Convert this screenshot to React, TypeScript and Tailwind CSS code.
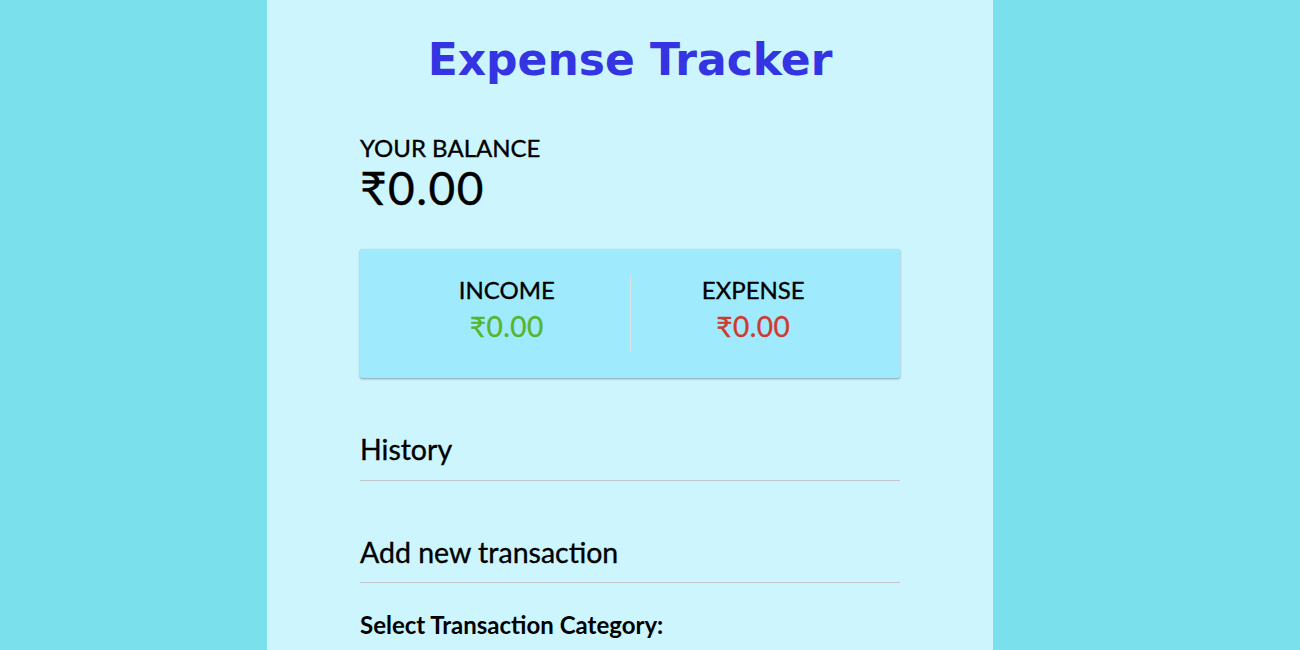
// Expense tracker — balance, income/expense card, history and add form.
const heavy = "[-webkit-text-stroke:0.35px_currentColor]";

function Stat({ label, amount, color }: { label: string; amount: string; color: string }) {
  return (
    <div className="flex flex-1 flex-col items-center self-start pt-[26px]">
      <h4 className={`text-[24px] leading-[30px] uppercase ${heavy}`}>{label}</h4>
      <p className={`text-[28px] leading-[42px] tracking-[0.5px] ${heavy} ${color}`}>{amount}</p>
    </div>
  );
}

export default function App() {
  return (
    <div className="flex min-h-screen bg-[#7ae0ec]">
      <div className="ml-[267px] flex w-[726px] flex-col items-center bg-[#ccf5fd] pb-10 font-['Lato',sans-serif] text-black">
        <h1 className="mt-[32px] font-['DejaVu_Sans',sans-serif] text-[44px] leading-[56px] font-bold text-[#3434e2]">
          Expense Tracker
        </h1>

        <div className="mt-[46px] w-[540px]">
          <h4 className={`text-[24px] leading-[28px] uppercase ${heavy}`}>Your Balance</h4>
          <p className={`text-[46px] leading-[52px] tracking-[1.5px] ${heavy}`}>₹0.00</p>

          <div className="mt-[35px] flex h-[129px] rounded-[2px] bg-[#a0eafd] px-[24px] shadow-[0_1px_3px_rgba(0,0,0,0.12),0_1px_2px_rgba(0,0,0,0.24)]">
            <Stat label="Income" amount="₹0.00" color="text-[#55b52f]" />
            <div className="h-[76px] w-px self-center bg-[#dde3e6]" />
            <Stat label="Expense" amount="₹0.00" color="text-[#cf3a2f]" />
          </div>

          <h3 className={`mt-[54px] border-b border-[#c2c6c8] pb-[14px] text-[28.5px] leading-[34px] ${heavy}`}>
            History
          </h3>

          <h3 className={`mt-[54px] border-b border-[#c2c6c8] pb-[13px] text-[28.5px] leading-[34px] ${heavy}`}>
            Add new transaction
          </h3>

          <label className="mt-[28px] block text-[24px] leading-[28px] font-bold">
            Select Transaction Category:
          </label>
        </div>
      </div>
    </div>
  );
}
